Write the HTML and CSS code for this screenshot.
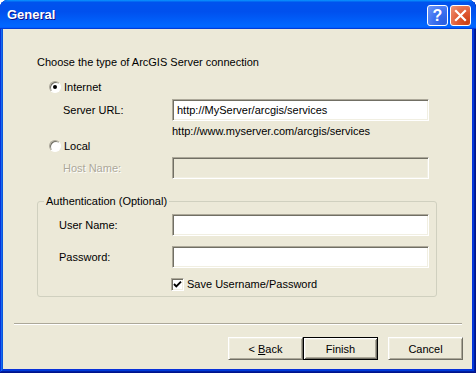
FILE: index.html
```html
<!DOCTYPE html>
<html lang="en">
<head>
  <meta charset="UTF-8" />
  <title>General</title>
  <link rel="stylesheet" href="styles.css">
</head>
<body>
  <div class="window">
    <!-- Title bar -->
    <div class="titlebar">
      <span class="title">General</span>
      <div class="title-buttons">
        <span class="tb-btn tb-help">?</span>
        <span class="tb-btn tb-close">
          <svg width="19" height="19" viewBox="0 0 19 19">
            <path d="M5 5 L14 14 M14 5 L5 14" stroke="#fff" stroke-width="2.2" stroke-linecap="square" />
          </svg>
        </span>
      </div>
    </div>

    <div class="client">
      <div class="content">
        <p class="intro">Choose the type of ArcGIS Server connection</p>

        <div class="radio-row first"><span class="radio checked"></span>Internet</div>
        <div class="field-row">
          <span class="field-label">Server URL:</span>
          <input class="textbox" type="text" value="http://MyServer/arcgis/services" />
        </div>
        <p class="hint">http://www.myserver.com/arcgis/services</p>

        <div class="radio-row local"><span class="radio"></span>Local</div>
        <div class="field-row host">
          <span class="field-label disabled">Host Name:</span>
          <input class="textbox" type="text" disabled />
        </div>

        <!-- Authentication group -->
        <fieldset class="group">
          <legend>Authentication (Optional)</legend>
          <div class="field-row first">
            <span class="field-label">User Name:</span>
            <input class="textbox" type="text" />
          </div>
          <div class="field-row pass">
            <span class="field-label">Password:</span>
            <input class="textbox" type="password" />
          </div>
          <div class="check-row">
            <span class="checkbox">
              <svg width="11" height="11" viewBox="0 0 11 11">
                <path d="M2 5 L4.3 7.4 L9 2.6" fill="none" stroke="#000" stroke-width="1.9" />
              </svg>
            </span>
            Save Username/Password
          </div>
        </fieldset>
      </div>

      <div class="footer">
        <div class="separator"></div>
        <div class="buttons">
          <button class="btn">&lt; <u>B</u>ack</button>
          <button class="btn default">Finish</button>
          <button class="btn cancel">Cancel</button>
        </div>
      </div>
    </div>
  </div>
</body>
</html>
```

FILE: styles.css
```css
:root {
  --face: #ECE9D8;
  --light: #F1EFE2;
  --shadow: #ACA899;
  --dark: #716F64;
}

body {
  margin: 0;
  background: #fff;
  font-family: "Liberation Sans", Arial, sans-serif;
  font-size: 11px;
  color: #000;
}

.window {
  width: 476px;
  height: 373px;
  box-sizing: border-box;
  display: flex;
  flex-direction: column;
  background: #0831d9;
  border-radius: 8px 8px 0 0;
  box-shadow: inset -1px -1px #00138c, inset 1px 1px #0831d9,
    inset -2px -2px #001ea0, inset 2px 2px #166aee,
    inset -3px -3px #003bda, inset 3px 3px #0855dd;
}

/* Title bar */
.titlebar {
  height: 29px;
  flex-shrink: 0;
  display: flex;
  align-items: flex-start;
  justify-content: space-between;
  padding: 0 5px 0 7px;
  border-radius: 8px 8px 0 0;
  background: linear-gradient(180deg, #0997ff, #0053ee 8%, #0050ee 40%, #06f 88%, #06f 93%, #005bff 95%, #003dd7 96%, #003dd7);
}

.title {
  margin-top: 7px;
  color: #fff;
  font-weight: bold;
  font-size: 13px;
  line-height: 15px;
  text-shadow: 1px 1px #0f1089;
}

.title-buttons {
  display: flex;
  gap: 2px;
  margin-top: 5px;
}

.tb-btn {
  width: 21px;
  height: 21px;
  box-sizing: border-box;
  border: 1px solid #fff;
  border-radius: 3px;
  display: flex;
  align-items: center;
  justify-content: center;
}

.tb-help {
  background: radial-gradient(circle at 85% 85%, #2c5fe0 0%, #3a6ff0 45%, #6e97f7 100%);
  color: #fff;
  font-weight: bold;
  font-size: 16px;
}

.tb-close {
  background: radial-gradient(circle at 85% 85%, #cc4014 0%, #e05a34 45%, #f0977a 100%);
}

/* Dialog body */
.client {
  flex: 1;
  margin: 0 4px 4px 3px;
  background: var(--face);
  display: flex;
  flex-direction: column;
}

.content {
  padding: 26px 0 0 34px;
}

.intro, .hint {
  margin: 0;
  line-height: 14px;
}

.radio-row {
  display: flex;
  align-items: center;
  gap: 3px;
  height: 14px;
  margin-left: 12px;
}

.radio-row.first {
  margin-top: 11px;
}

.radio-row.local {
  margin-top: 1px;
}

.radio {
  width: 12px;
  height: 12px;
  box-sizing: border-box;
  border-radius: 50%;
  background: #fff;
  border: 1px solid;
  border-color: var(--shadow) #fff #fff var(--shadow);
  box-shadow: inset 1px 1px var(--dark);
  display: flex;
  align-items: center;
  justify-content: center;
}

.radio.checked::after {
  content: "";
  width: 4px;
  height: 4px;
  border-radius: 50%;
  background: #000;
}

.field-row {
  display: flex;
  align-items: center;
  height: 22px;
  margin-top: 5px;
}

.field-row.host {
  margin-top: 4px;
}

.field-label {
  width: 135px;
  padding-left: 26px;
  box-sizing: border-box;
}

.field-label.disabled {
  color: var(--shadow);
  text-shadow: 1px 1px #fff;
}

.textbox {
  width: 257px;
  height: 22px;
  box-sizing: border-box;
  margin: 0;
  padding: 0 4px;
  font-family: inherit;
  font-size: 11px;
  color: #000;
  background: #fff;
  border: 1px solid;
  border-color: var(--shadow) #fff #fff var(--shadow);
  box-shadow: inset 1px 1px var(--dark), inset -1px -1px var(--light);
  outline: none;
}

.textbox:disabled {
  background: var(--face);
}

.hint {
  margin: 3px 0 0 135px;
}

/* Authentication group */
.group {
  width: 400px;
  box-sizing: border-box;
  margin: 15px 0 0;
  padding: 0 0 5px;
  border: 1px solid #d0d0bf;
  border-radius: 3px;
}

.group legend {
  margin-left: 6px;
  padding: 0 2px;
  line-height: 14px;
}

.group .field-label {
  width: 134px;
  padding-left: 21px;
}

.group .field-row.first {
  margin-top: 6px;
}

.group .field-row.pass {
  margin-top: 10px;
}

.check-row {
  display: flex;
  align-items: center;
  gap: 3px;
  height: 14px;
  margin: 9px 0 0 133px;
}

.checkbox {
  width: 13px;
  height: 13px;
  box-sizing: border-box;
  background: #fff;
  border: 1px solid;
  border-color: var(--shadow) #fff #fff var(--shadow);
  box-shadow: inset 1px 1px var(--dark), inset -1px -1px var(--light);
  display: flex;
}

/* Footer */
.footer {
  padding: 0 9px 0 11px;
}

.separator {
  margin: 26px 1px 0 0;
  border-top: 1px solid var(--shadow);
  border-bottom: 1px solid #fff;
}

.buttons {
  display: flex;
  justify-content: flex-end;
  margin-top: 12px;
}

.btn {
  width: 75px;
  height: 23px;
  padding: 0;
  font-family: inherit;
  font-size: 11px;
  color: #000;
  background: var(--face);
  border: 1px solid;
  border-color: #fff var(--dark) var(--dark) #fff;
  box-shadow: inset 1px 1px var(--light), inset -1px -1px var(--shadow);
}

.btn.default {
  border: 1px solid #000;
  box-shadow: inset 1px 1px #fff, inset -1px -1px var(--dark),
    inset 2px 2px var(--light), inset -2px -2px var(--shadow);
}

.btn.cancel {
  margin-left: 10px;
}
```
